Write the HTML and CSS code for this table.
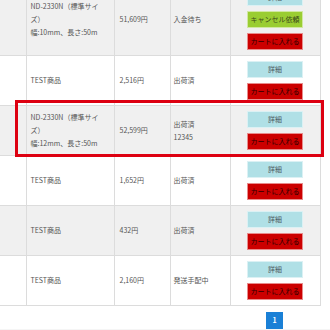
FILE: index.html
```html
<!DOCTYPE html>
<html lang="ja">
<head>
<meta charset="utf-8">
<title>注文履歴</title>
<link rel="stylesheet" href="styles.css">
</head>
<body>
<div class="orders">
  <table class="order-table">
    <colgroup>
      <col class="c-no">
      <col class="c-name">
      <col class="c-price">
      <col class="c-status">
      <col class="c-action">
    </colgroup>
    <tbody>
      <tr class="alt">
        <td></td>
        <td>ND-2330N（標準サイ<br>ズ）<br>幅:10mm、長さ:50m</td>
        <td>51,609円</td>
        <td>入金待ち</td>
        <td>
          <div class="actions">
            <span class="btn btn-detail">詳細</span>
            <span class="btn btn-cancel">キャンセル依頼</span>
            <span class="btn btn-cart">カートに入れる</span>
          </div>
        </td>
      </tr>
      <tr>
        <td></td>
        <td>TEST商品</td>
        <td>2,516円</td>
        <td>出荷済</td>
        <td>
          <div class="actions">
            <span class="btn btn-detail">詳細</span>
            <span class="btn btn-cart">カートに入れる</span>
          </div>
        </td>
      </tr>
      <tr class="alt">
        <td></td>
        <td>ND-2330N（標準サイ<br>ズ）<br>幅:12mm、長さ:50m</td>
        <td>52,599円</td>
        <td>出荷済<br>12345</td>
        <td>
          <div class="actions">
            <span class="btn btn-detail">詳細</span>
            <span class="btn btn-cart">カートに入れる</span>
          </div>
        </td>
      </tr>
      <tr>
        <td></td>
        <td>TEST商品</td>
        <td>1,652円</td>
        <td>出荷済</td>
        <td>
          <div class="actions">
            <span class="btn btn-detail">詳細</span>
            <span class="btn btn-cart">カートに入れる</span>
          </div>
        </td>
      </tr>
      <tr class="alt">
        <td></td>
        <td>TEST商品</td>
        <td>432円</td>
        <td>出荷済</td>
        <td>
          <div class="actions">
            <span class="btn btn-detail">詳細</span>
            <span class="btn btn-cart">カートに入れる</span>
          </div>
        </td>
      </tr>
      <tr>
        <td></td>
        <td>TEST商品</td>
        <td>2,160円</td>
        <td>発送手配中</td>
        <td>
          <div class="actions">
            <span class="btn btn-detail">詳細</span>
            <span class="btn btn-cart">カートに入れる</span>
          </div>
        </td>
      </tr>
    </tbody>
  </table>
  <div class="row-highlight"></div>
  <div class="pager">
    <span class="page current">1</span>
  </div>
  <div class="foot"></div>
</div>
</body>
</html>
```

FILE: styles.css
```css
html, body {
  margin: 0;
  padding: 0;
  background: #fff;
}

body {
  font-family: "Noto Sans CJK JP", "Noto Sans", sans-serif;
  font-size: 7px;
  line-height: 13px;
  color: #555;
}

.orders {
  position: relative;
  margin-top: -17px;
}

.order-table {
  width: 320px;
  border-collapse: collapse;
  table-layout: fixed;
}

.c-no { width: 26px; }
.c-name { width: 88px; }
.c-price { width: 56px; }
.c-status { width: 60px; }
.c-action { width: 90px; }

.order-table td {
  border: 1px solid #dcdcdc;
  border-left: none;
  padding: 5px 4px;
  vertical-align: middle;
  white-space: nowrap;
}

.order-table td:nth-child(1) { padding: 0; }
.order-table td:nth-child(3) { padding-left: 5px; }
.order-table td:nth-child(4) { padding-left: 3px; }
.order-table td:not(:first-child) { border-left: 1px solid #dcdcdc; }

.order-table tr.alt td {
  background: #f0f0f0;
}

.actions {
  display: flex;
  flex-direction: column;
  align-items: center;
  gap: 5px;
}

.btn {
  box-sizing: border-box;
  display: flex;
  align-items: center;
  justify-content: center;
  width: 56px;
  height: 17px;
  font-size: 7px;
  line-height: 1;
  border: 1px solid rgba(255, 255, 255, 0.55);
}

.btn-detail {
  background: #b0e0e6;
  color: #4a5a60;
}

.btn-cancel {
  background: #9acd32;
  color: #3a4a1a;
}

.btn-cart {
  background: #cc0000;
  color: #2a0000;
}

/* selected order frame drawn over the third row */
.row-highlight {
  position: absolute;
  top: 117px;
  left: 15px;
  width: 309px;
  height: 57px;
  box-sizing: border-box;
  border: 3px solid #dd0011;
  pointer-events: none;
}

.pager {
  display: flex;
  justify-content: flex-end;
  padding: 6px 47px 0 0;
}

.page {
  display: flex;
  align-items: center;
  justify-content: center;
  width: 17px;
  height: 17px;
  font-size: 7px;
  font-weight: bold;
  line-height: 1;
}

.page.current {
  background: #1a80d6;
  color: #fff;
}

.foot {
  height: 10px;
  background: #f5f5f5;
}
```
